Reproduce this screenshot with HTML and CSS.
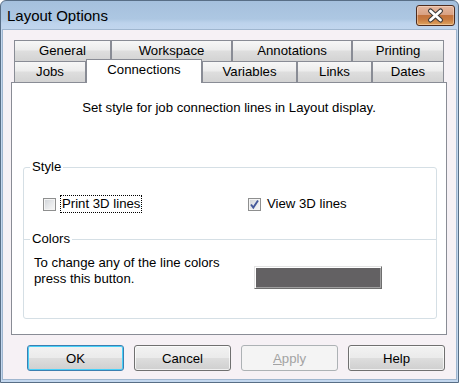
FILE: index.html
```html
<!DOCTYPE html>
<html lang="en">
<head>
  <meta charset="UTF-8">
  <title>Layout Options</title>
  <link rel="stylesheet" href="styles.css">
</head>
<body>

  <div class="window">
    <div class="titlebar">
      <span class="title">Layout Options</span>
      <button class="close" aria-label="Close">
        <svg width="37" height="19" viewBox="0 0 37 19">
          <path d="M13.5 5 L23.5 14 M23.5 5 L13.5 14" stroke="#3a3a3a" stroke-width="5" stroke-linecap="round"/>
          <path d="M13.5 5 L23.5 14 M23.5 5 L13.5 14" stroke="#ffffff" stroke-width="2.8" stroke-linecap="round"/>
        </svg>
      </button>
    </div>

    <div class="client">
      <div class="tabs">
        <div class="tab-row">
          <div class="tab tab-general">General</div>
          <div class="tab tab-workspace">Workspace</div>
          <div class="tab tab-annotations">Annotations</div>
          <div class="tab tab-printing">Printing</div>
        </div>
        <div class="tab-row">
          <div class="tab tab-jobs">Jobs</div>
          <div class="tab tab-connections active">Connections</div>
          <div class="tab tab-variables">Variables</div>
          <div class="tab tab-links">Links</div>
          <div class="tab tab-dates">Dates</div>
        </div>
      </div>

      <div class="panel">
        <p class="intro">Set style for job connection lines in Layout display.</p>

        <fieldset class="group style-group">
          <legend>Style</legend>
          <div class="checks">
            <label class="check check-print">
              <span class="box"></span>
              <span class="focus">Print 3D lines</span>
            </label>
            <label class="check">
              <span class="box">
                <svg width="11" height="11" viewBox="0 0 11 11">
                  <path d="M2 5.5 L4.3 8.5 L9 1.5" fill="none" stroke="#44589a" stroke-width="1.9"/>
                </svg>
              </span>
              <span class="check-text">View 3D lines</span>
            </label>
          </div>

          <fieldset class="group colors-group">
            <legend>Colors</legend>
            <div class="colors-row">
              <p class="colors-text">To change any of the line colors<br>press this button.</p>
              <button class="swatch" aria-label="Line colors"></button>
            </div>
          </fieldset>
        </fieldset>
      </div>

      <div class="buttons">
        <button class="btn default">OK</button>
        <button class="btn">Cancel</button>
        <button class="btn disabled"><u>A</u>pply</button>
        <button class="btn">Help</button>
      </div>
    </div>
  </div>

</body>
</html>
```

FILE: styles.css
```css
body {
  margin: 0;
  font-family: "Liberation Sans", Arial, sans-serif;
  font-size: 13.2px;
  background: #ffffff;
}

.window {
  width: 459px;
  height: 383px;
  box-sizing: border-box;
  border: 1px solid #586e86;
  border-radius: 6px 6px 0 0;
  background: linear-gradient(#a5c0dd 0, #adc7e2 18px, #bdd3ec 22px, #c3d7ee 30px, #c3d7ee 100%);
  display: flex;
  flex-direction: column;
}

.titlebar {
  height: 29px;
  display: flex;
  align-items: flex-start;
}

.title {
  font-size: 15px;
  line-height: 30px;
  margin-left: 6px;
  color: #000;
}

.close {
  margin: 4px 3px 0 auto;
  width: 39px;
  height: 21px;
  padding: 0;
  border: 1px solid #4e2c1e;
  border-radius: 3px;
  background: linear-gradient(#e4b7a0 0, #d9a183 45%, #c2723d 50%, #c77a40 70%, #e0a45e 100%);
  box-shadow: inset 0 0 0 1px rgba(255, 230, 210, 0.45);
  display: flex;
  align-items: center;
  justify-content: center;
}

.client {
  flex: 1;
  margin: 0 2px 3px 2px;
  background: #f6f1f5;
  box-shadow: 0 0 0 1px #9fb6cf;
  padding-top: 10px;
}

.tabs {
  margin-left: 11px;
}

.tab-row {
  display: flex;
  align-items: flex-start;
}

.tab {
  height: 21px;
  box-sizing: border-box;
  border: 1px solid #898c95;
  border-bottom: none;
  background: linear-gradient(#f7f7f7 0, #ececec 45%, #dedede 50%, #d3d3d3 100%);
  text-align: center;
  line-height: 20px;
  color: #000;
}

.tab.active {
  position: relative;
  z-index: 1;
  height: 24px;
  margin-top: -2px;
  margin-bottom: -1px;
  background: #ffffff;
}

.tab-general { width: 97px; }
.tab-workspace { width: 121px; }
.tab-annotations { width: 120px; }
.tab-printing { width: 92px; }
.tab-jobs { width: 72px; }
.tab-connections { width: 116px; }
.tab-variables { width: 95px; }
.tab-links { width: 75px; }
.tab-dates { width: 72px; }

.panel {
  margin-left: 8px;
  width: 436px;
  height: 253px;
  box-sizing: border-box;
  border: 1px solid #898c95;
  background: #ffffff;
}

.intro {
  margin: 0;
  padding-top: 17px;
  line-height: 16px;
  text-align: center;
}

.group {
  margin: 0;
  padding: 0;
  min-width: 0;
  border: 1px solid #d5dfe5;
  border-radius: 3px;
}

.group legend {
  margin-left: 6px;
  padding: 0 2px;
  line-height: 16px;
}

.style-group {
  margin: 43px 0 0 11px;
  width: 414px;
  height: 160px;
  box-sizing: border-box;
}

.checks {
  display: flex;
  margin-top: 21px;
  padding-left: 19px;
  line-height: 16px;
}

.check {
  display: flex;
  align-items: center;
  flex: none;
}

.check-print {
  width: 205px;
}

.box {
  width: 13px;
  height: 13px;
  box-sizing: border-box;
  border: 1px solid #8e8f8f;
  background: linear-gradient(135deg, #cdd1d6 0, #e6e8ea 50%, #f8f8f8 100%);
  box-shadow: inset 0 0 0 1px #f4f4f4;
  margin-right: 5px;
  display: flex;
  align-items: center;
  justify-content: center;
}

.focus {
  display: inline-block;
  padding: 0 1px;
  outline: 1px dotted #000;
}

.check-text {
  padding-left: 1px;
}

.colors-group {
  margin-top: 19px;
  border: none;
  border-top: 1px solid #d5dfe5;
  border-radius: 0;
}

.colors-row {
  display: flex;
  align-items: flex-start;
  padding: 8px 0 0 10px;
}

.colors-text {
  margin: 0;
  width: 220px;
  flex: none;
  line-height: 16px;
  white-space: nowrap;
}

.swatch {
  margin-top: 11px;
  width: 128px;
  height: 23px;
  padding: 0;
  background: #636163;
  border: 1px solid;
  border-color: #e3e3e3 #6e6e6e #6e6e6e #e3e3e3;
  box-shadow: inset 1px 1px #ffffff, inset -1px -1px #a0a0a0;
}

.buttons {
  display: flex;
  gap: 10px;
  margin: 10px 0 0 24px;
}

.btn {
  width: 97px;
  height: 26px;
  padding: 0;
  font-family: inherit;
  font-size: 13.2px;
  color: #000;
  border: 1px solid #707070;
  border-radius: 3px;
  background: linear-gradient(#f2f2f2 0, #ebebeb 48%, #dddddd 52%, #cfcfcf 100%);
  box-shadow: inset 0 0 0 1px rgba(255, 255, 255, 0.7);
}

.btn.default {
  border-color: #3c7fb1;
  box-shadow: inset 0 0 0 1px #48d0f8;
}

.btn.disabled {
  color: #a3a3a3;
  border-color: #adb2b5;
  background: #f4f4f4;
  box-shadow: none;
}

.btn u {
  text-decoration: underline;
}
```
